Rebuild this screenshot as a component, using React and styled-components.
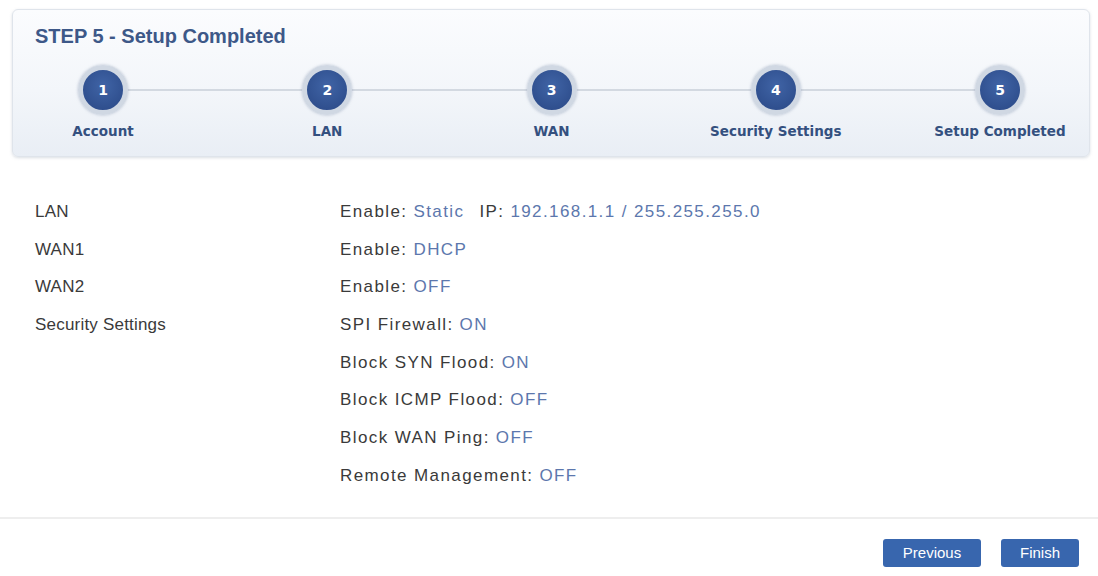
import React from "react";
import styled, { createGlobalStyle } from "styled-components";

const GlobalStyle = createGlobalStyle`
  html, body {
    margin: 0;
    padding: 0;
    background: #ffffff;
  }
  body {
    font-family: "Liberation Sans", Arial, sans-serif;
    width: 1098px;
    height: 576px;
    overflow: hidden;
  }
`;

const Page = styled.div`
  display: flex;
  flex-direction: column;
  width: 1098px;
`;

const Wizard = styled.div`
  margin: 9px 8px 0 12px;
  height: 148px;
  box-sizing: border-box;
  border: 1px solid #dfe4eb;
  border-radius: 6px;
  background: linear-gradient(to bottom, #fbfcfe 0%, #f3f6fa 55%, #e9eef5 100%);
  box-shadow: 0 1px 3px rgba(150, 160, 175, 0.35);
  padding: 14px 0 0 0;
`;

const Title = styled.h2`
  margin: 0 0 0 22px;
  font-family: "Liberation Sans", Arial, sans-serif;
  font-size: 20px;
  line-height: 24px;
  font-weight: bold;
  color: #3d5888;
`;

const Steps = styled.div`
  position: relative;
  display: flex;
  justify-content: space-between;
  padding: 17px 14px 0 15px;

  &::before {
    content: "";
    position: absolute;
    left: 90px;
    right: 89px;
    top: 41px;
    height: 2px;
    background: #d3d9e1;
  }
`;

const Step = styled.div`
  position: relative;
  width: 150px;
  display: flex;
  flex-direction: column;
  align-items: center;
`;

const Bubble = styled.div`
  width: 40px;
  height: 40px;
  border-radius: 50%;
  border: 5px solid #d0d8e3;
  box-shadow: 0 0 3px rgba(140, 155, 180, 0.6);
  background: radial-gradient(circle at 50% 40%, #4064a6 0%, #30508f 70%, #2a4686 100%);
  display: flex;
  align-items: center;
  justify-content: center;
  color: #ffffff;
  font-family: "DejaVu Sans", Verdana, sans-serif;
  font-size: 14px;
  font-weight: bold;
`;

const StepLabel = styled.div`
  margin-top: 8px;
  font-family: "DejaVu Sans", Verdana, sans-serif;
  font-size: 13.5px;
  font-weight: bold;
  color: #34507f;
  white-space: nowrap;
`;

const Summary = styled.div`
  padding: 36px 0 22px 35px;
  border-bottom: 2px solid #eeeeee;
`;

const Row = styled.div`
  display: flex;
  height: 37.7px;
  align-items: center;
  font-size: 17px;
  color: #3a3a3a;
`;

const Name = styled.div`
  width: 305px;
  letter-spacing: 0.2px;
`;

const Detail = styled.div`
  display: flex;
  gap: 15px;
  letter-spacing: 1.4px;
`;

const Pair = styled.span`
  white-space: nowrap;
`;

const Value = styled.span`
  color: #5c77ad;
  margin-left: 6px;
`;

const Footer = styled.div`
  display: flex;
  justify-content: flex-end;
  gap: 20px;
  padding: 20px 19px 0 0;
`;

const Button = styled.button`
  height: 28px;
  width: ${(p) => p.$w}px;
  border: none;
  border-radius: 3px;
  background: #3866ae;
  color: #ffffff;
  font-family: "Liberation Sans", Arial, sans-serif;
  font-size: 15px;
  padding: 0;
  cursor: pointer;
`;

const steps = ["Account", "LAN", "WAN", "Security Settings", "Setup Completed"];

const rows = [
  { name: "LAN", items: [["Enable:", "Static"], ["IP:", "192.168.1.1 / 255.255.255.0"]] },
  { name: "WAN1", items: [["Enable:", "DHCP"]] },
  { name: "WAN2", items: [["Enable:", "OFF"]] },
  { name: "Security Settings", items: [["SPI Firewall:", "ON"]] },
  { name: "", items: [["Block SYN Flood:", "ON"]] },
  { name: "", items: [["Block ICMP Flood:", "OFF"]] },
  { name: "", items: [["Block WAN Ping:", "OFF"]] },
  { name: "", items: [["Remote Management:", "OFF"]] },
];

const App = () => (
  <Page>
    <GlobalStyle />
    <Wizard>
      <Title>STEP 5 - Setup Completed</Title>
      <Steps>
        {steps.map((label, i) => (
          <Step key={label}>
            <Bubble>{i + 1}</Bubble>
            <StepLabel>{label}</StepLabel>
          </Step>
        ))}
      </Steps>
    </Wizard>
    <Summary>
      {rows.map((row, i) => (
        <Row key={i}>
          <Name>{row.name}</Name>
          <Detail>
            {row.items.map(([k, v]) => (
              <Pair key={k}>
                {k}
                <Value>{v}</Value>
              </Pair>
            ))}
          </Detail>
        </Row>
      ))}
    </Summary>
    <Footer>
      <Button $w={98}>Previous</Button>
      <Button $w={78}>Finish</Button>
    </Footer>
  </Page>
);

export default App;
